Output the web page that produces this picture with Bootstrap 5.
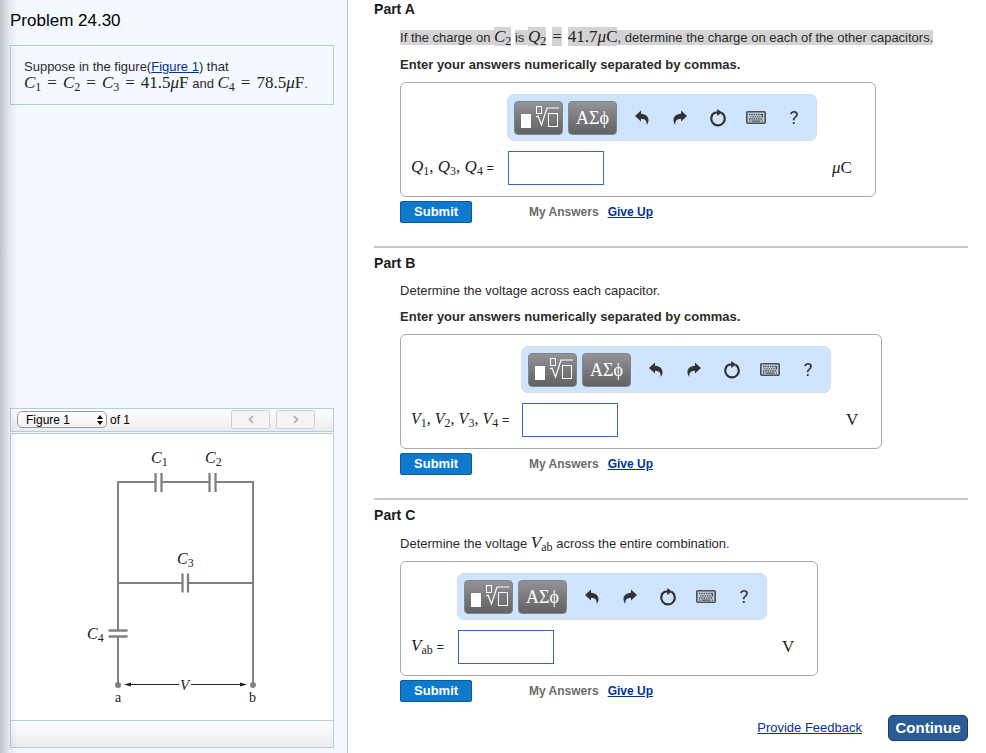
<!DOCTYPE html>
<html lang="en">
<head>
<meta charset="utf-8">
<meta name="viewport" content="width=device-width, initial-scale=1">
<title>Problem 24.30</title>
<link href="https://cdn.jsdelivr.net/npm/bootstrap@5.3.0/dist/css/bootstrap.min.css" rel="stylesheet">
<style>
body{font-family:"Liberation Sans",Arial,sans-serif;font-size:13px;line-height:18px;color:#2b2b2b;background:#fff}
a{color:#003399}
.side-pane{flex:0 0 35.3%;min-width:300px;background:#f4f8ff;border-right:1px solid #b5c9dc;padding:12px 13px 5px 10px}
.side-pane::after{content:"";position:absolute;inset:0 auto 0 0;width:18px;pointer-events:none;background:linear-gradient(90deg,rgba(110,120,125,.42),rgba(110,120,125,.12) 50%,transparent)}
.side-title{font-size:17px;line-height:18px;color:#000;margin-bottom:15px}
.line-blue{border:1px solid #b7cade}
.intro{padding:13px 13px 12px;line-height:16px}
.fig-bar{height:24px;margin-bottom:1px;padding:0 18px 0 6px;background:linear-gradient(#fff,#ececec)}
.fig-foot{height:27px;border-top:1px solid #b7cade;background:linear-gradient(#fff,#ececec)}
.fig-pick{appearance:none;width:90px;height:17px;padding:0 8px;border:1px solid #999;border-radius:5px;background:linear-gradient(#fff,#f1f1f1);font-size:12px;line-height:14px;color:#000}
.fig-pick-arrows{right:4px;top:4px;pointer-events:none}
.fig-of{font-size:12px;margin-left:3px}
.step{width:39px;height:19px;border:1px solid #d0d0d0;border-radius:2px;background:#f4f4f4;padding:0}
.step-prev{margin-right:6px}
.main-pane{padding:0 18px 12px 26px}
.part-title{font-size:14px;line-height:18px;font-weight:bold;color:#1b1b1b;margin-bottom:10px}
.part-body{padding-left:26px}
.part-rule{height:2px;margin:23px 0 6px;border:0;background:#c8c8c8;opacity:1}
.ask{margin-bottom:8px}
.ask-math{line-height:20px}
.ask-only{margin-bottom:7px}
.ask-bold{font-weight:bold;margin-bottom:8px}
.mx{font-family:"Liberation Serif",serif;font-size:17px;line-height:16px;white-space:nowrap;color:#222}
.mx sub{font-size:12px;line-height:0;bottom:-3px;font-style:normal}
.rel{margin:0 6px}
.hl{background:#d3d3d3}
.answer{width:fit-content;border:1px solid #a9a9a9;border-radius:6px;padding:11px 23px 11px 10px;display:grid;grid-template-columns:auto auto auto;row-gap:10px;align-items:center}
.answer label{grid-row:2;grid-column:1;white-space:nowrap}
.label-q{width:96px}
.label-v{width:110px}
.label-v .mx{font-size:16px}
.label-ab{width:46px}
.tools{grid-row:1;grid-column:2;height:47px;border:1px solid #d9dadb;border-radius:7px;background:#cfe5ff;padding:0 3px 0 6px}
.answer input{grid-row:2;grid-column:2;width:96px;height:34px;margin-left:1px;border:1px solid #3366cc;background:#fff}
.unit{grid-row:2;grid-column:3;margin-left:15px}
.pad-btn{width:49px;height:34px;border:1px solid #858589;border-radius:4px;background:linear-gradient(#929298,#626262);color:#fff;padding:0;font-family:"Liberation Serif",serif;font-size:18px;line-height:30px}
.pad-greek{margin:0 6px 0 5px}
.tool-btn{width:38px;height:34px;border:0;background:none;color:#333;padding:0;font-family:Roboto,sans-serif;font-size:19px}
.send{width:72px;height:22px;border:1px solid #0b5a9c;border-radius:2px;background:#0f79ce;color:#fff;font-weight:bold;font-size:13px;line-height:18px;padding:0}
.after{font-size:12px;font-weight:bold}
.mine{color:#6b6b6b;margin-left:57px;margin-right:9px}
.page-end{margin-top:13px}
.feedback{margin-right:26px}
.go-on{width:80px;height:26px;border:1px solid #123f75;border-radius:5px;background:#2b5b97;color:#fff;font-weight:bold;font-size:15px;line-height:22px;padding:0}
svg{display:block}
.tool-btn svg,.pad-btn svg,.step svg{margin:auto}
</style>
<script src="https://cdn.jsdelivr.net/npm/bootstrap@5.3.0/dist/js/bootstrap.bundle.min.js"></script>
</head>
<body>
<svg width="0" height="0" class="position-absolute" aria-hidden="true">
  <symbol id="i-root" viewBox="0 0 40 26">
    <rect x="2" y="9" width="10" height="14" fill="#fff"/>
    <path d="M17 12l2-1 3.500 9 5.500-17h12" fill="none" stroke="#fff" stroke-width="1.200"/>
    <rect x="17.500" y="1.500" width="5" height="7" fill="none" stroke="#fff"/>
    <rect x="29.500" y="8.500" width="9" height="13" fill="none" stroke="#fff"/>
  </symbol>
  <symbol id="i-undo" viewBox="0 0 16 16">
    <path d="M1 6L7 .5v3.200c5 .3 7.500 3 7.500 6.300 0 2-.8 3.700-1.800 5 .3-3.600-1-6.200-5.700-6.300V11.500z" fill="#333"/>
  </symbol>
  <symbol id="i-turn" viewBox="0 0 18 18">
    <path d="M12.500 3.800a6.800 6.800 0 1 1-6.600-.2" fill="none" stroke="#333" stroke-width="2.200"/>
    <path d="M8.200 0l5 3.400-5 3.700z" fill="#333"/>
    <path d="M5.500 4l4-1" stroke="#333" stroke-width="2"/>
  </symbol>
  <symbol id="i-keys" viewBox="0 0 20 13">
    <rect x=".8" y=".8" width="18.400" height="11.400" rx="1" fill="#c3d0dc" stroke="#4a5056" stroke-width="1.600"/>
    <path d="M3 3.500h14M4 5.800h13M3 8h14" stroke="#4a5056" stroke-width="1.300" stroke-dasharray="1.400 .9"/>
    <path d="M5.500 10.200h9M3 10.200h1.200M15.800 10.200h1.200M16.500 3v3" stroke="#4a5056" stroke-width="1.200"/>
  </symbol>
</svg>
<div class="d-flex min-vh-100">
  <aside class="side-pane d-flex flex-column position-relative">
    <h1 class="side-title">Problem 24.30</h1>
    <div class="intro line-blue">Suppose in the figure(<a href="#figure">Figure 1</a>) that<br>
      <span class="mx"><i>C</i><sub>1</sub><span class="rel">=</span><i>C</i><sub>2</sub><span class="rel">=</span><i>C</i><sub>3</sub><span class="rel">=</span>41.5<i>μ</i>F</span> and <span class="mx"><i>C</i><sub>4</sub><span class="rel">=</span>78.5<i>μ</i>F</span>.</div>
    <div class="mt-auto" id="figure">
      <div class="fig-bar line-blue d-flex align-items-center">
        <div class="position-relative">
          <select class="fig-pick d-block" id="fig"><option>Figure 1</option></select>
          <svg class="fig-pick-arrows position-absolute" width="6" height="10" viewBox="0 0 6 10"><path d="M3 0l3 4H0zM3 10l3-4H0z" fill="#111"/></svg>
        </div>
        <label for="fig" class="fig-of me-auto lh-1 text-black">of 1</label>
        <button type="button" class="step step-prev" aria-label="Previous"><svg width="6" height="9" viewBox="0 0 6 9"><path d="M5 1L1.500 4.500 5 8" fill="none" stroke="#aaa" stroke-width="1.700"/></svg></button>
        <button type="button" class="step" aria-label="Next"><svg width="6" height="9" viewBox="0 0 6 9"><path d="M1 1l3.500 3.500L1 8" fill="none" stroke="#aaa" stroke-width="1.700"/></svg></button>
      </div>
      <div class="line-blue bg-white">
        <svg class="w-100 h-auto" viewBox="0 0 322 286" role="img" aria-label="Capacitor network between a and b" font-family="Liberation Serif, serif" font-size="16" fill="#222">
          <g stroke="#808184" stroke-width="2" fill="none">
            <path d="M144.500 48H107v148.500M107 202.500V251M150.500 48h48M204.500 48H242v203M107 149h64.500M177 149h65"/>
            <path stroke-width="2.300" d="M144.500 39v19M150.500 39v19M198.500 39v19M204.500 39v19M171.500 139.500v19M177 139.500v19M97.500 196.500h19M97.500 202.500h19"/>
          </g>
          <circle cx="107" cy="251" r="3" fill="#808184"/><circle cx="242" cy="251" r="3" fill="#808184"/>
          <path d="M118 250.500h50M180 250.500h52" stroke="#222"/>
          <path d="M113 250.500l7-2v4zM236 250.500l-7-2v4z"/>
          <text x="140" y="29" font-style="italic">C<tspan dy="3" font-size="12" font-style="normal">1</tspan></text>
          <text x="194" y="29" font-style="italic">C<tspan dy="3" font-size="12" font-style="normal">2</tspan></text>
          <text x="166" y="130" font-style="italic">C<tspan dy="3" font-size="12" font-style="normal">3</tspan></text>
          <text x="76" y="205" font-style="italic">C<tspan dy="3" font-size="12" font-style="normal">4</tspan></text>
          <text x="169" y="256" font-size="15" font-style="italic">V</text>
          <text x="104" y="268" font-size="14">a</text>
          <text x="238" y="268" font-size="14">b</text>
        </svg>
        <div class="fig-foot"></div>
      </div>
    </div>
  </aside>

  <main class="main-pane flex-grow-1">
    <section>
      <h2 class="part-title">Part A</h2>
      <div class="part-body">
        <p class="ask ask-math"><span class="hl">If the charge on </span><span class="mx hl"><i>C</i><sub>2</sub></span> <span class="hl">is </span><span class="mx"><span class="hl"><i>Q</i><sub>2</sub></span><span class="rel hl">=</span><span class="hl">41.7<i>μ</i>C</span></span><span class="hl">, determine the charge on each of the other capacitors.</span></p>
        <p class="ask-bold">Enter your answers numerically separated by commas.</p>
        <form class="answer">
          <div class="tools d-flex align-items-center" role="toolbar">
            <button type="button" class="pad-btn" aria-label="Templates"><svg width="40" height="26"><use href="#i-root"/></svg></button>
            <button type="button" class="pad-btn pad-greek">ΑΣϕ</button>
            <button type="button" class="tool-btn" aria-label="Undo"><svg width="16" height="16"><use href="#i-undo"/></svg></button>
            <button type="button" class="tool-btn" aria-label="Redo"><svg width="16" height="16"><use href="#i-undo" transform="translate(16 0) scale(-1 1)"/></svg></button>
            <button type="button" class="tool-btn" aria-label="Reset"><svg width="18" height="18"><use href="#i-turn"/></svg></button>
            <button type="button" class="tool-btn" aria-label="Keyboard"><svg width="20" height="13"><use href="#i-keys"/></svg></button>
            <button type="button" class="tool-btn">?</button>
          </div>
          <label class="label-q" for="ans-a"><span class="mx"><i>Q</i><sub>1</sub>, <i>Q</i><sub>3</sub>, <i>Q</i><sub>4</sub></span> =</label>
          <input id="ans-a" type="text">
          <span class="unit mx"><i>μ</i>C</span>
        </form>
        <div class="after d-flex align-items-center mt-1"><button type="button" class="send">Submit</button><span class="mine">My Answers</span><a href="#">Give Up</a></div>
      </div>
    </section>
    <hr class="part-rule">
    <section>
      <h2 class="part-title">Part B</h2>
      <div class="part-body">
        <p class="ask">Determine the voltage across each capacitor.</p>
        <p class="ask-bold">Enter your answers numerically separated by commas.</p>
        <form class="answer">
          <div class="tools d-flex align-items-center" role="toolbar">
            <button type="button" class="pad-btn" aria-label="Templates"><svg width="40" height="26"><use href="#i-root"/></svg></button>
            <button type="button" class="pad-btn pad-greek">ΑΣϕ</button>
            <button type="button" class="tool-btn" aria-label="Undo"><svg width="16" height="16"><use href="#i-undo"/></svg></button>
            <button type="button" class="tool-btn" aria-label="Redo"><svg width="16" height="16"><use href="#i-undo" transform="translate(16 0) scale(-1 1)"/></svg></button>
            <button type="button" class="tool-btn" aria-label="Reset"><svg width="18" height="18"><use href="#i-turn"/></svg></button>
            <button type="button" class="tool-btn" aria-label="Keyboard"><svg width="20" height="13"><use href="#i-keys"/></svg></button>
            <button type="button" class="tool-btn">?</button>
          </div>
          <label class="label-v" for="ans-b"><span class="mx"><i>V</i><sub>1</sub>, <i>V</i><sub>2</sub>, <i>V</i><sub>3</sub>, <i>V</i><sub>4</sub></span> =</label>
          <input id="ans-b" type="text">
          <span class="unit mx">V</span>
        </form>
        <div class="after d-flex align-items-center mt-1"><button type="button" class="send">Submit</button><span class="mine">My Answers</span><a href="#">Give Up</a></div>
      </div>
    </section>
    <hr class="part-rule">
    <section>
      <h2 class="part-title">Part C</h2>
      <div class="part-body">
        <p class="ask-only ask-math">Determine the voltage <span class="mx"><i>V</i><sub>ab</sub></span> across the entire combination.</p>
        <form class="answer">
          <div class="tools d-flex align-items-center" role="toolbar">
            <button type="button" class="pad-btn" aria-label="Templates"><svg width="40" height="26"><use href="#i-root"/></svg></button>
            <button type="button" class="pad-btn pad-greek">ΑΣϕ</button>
            <button type="button" class="tool-btn" aria-label="Undo"><svg width="16" height="16"><use href="#i-undo"/></svg></button>
            <button type="button" class="tool-btn" aria-label="Redo"><svg width="16" height="16"><use href="#i-undo" transform="translate(16 0) scale(-1 1)"/></svg></button>
            <button type="button" class="tool-btn" aria-label="Reset"><svg width="18" height="18"><use href="#i-turn"/></svg></button>
            <button type="button" class="tool-btn" aria-label="Keyboard"><svg width="20" height="13"><use href="#i-keys"/></svg></button>
            <button type="button" class="tool-btn">?</button>
          </div>
          <label class="label-ab" for="ans-c"><span class="mx"><i>V</i><sub>ab</sub></span> =</label>
          <input id="ans-c" type="text">
          <span class="unit mx">V</span>
        </form>
        <div class="after d-flex align-items-center mt-1"><button type="button" class="send">Submit</button><span class="mine">My Answers</span><a href="#">Give Up</a></div>
      </div>
    </section>
    <div class="page-end d-flex justify-content-end align-items-center"><a href="#" class="feedback">Provide Feedback</a><button type="button" class="go-on">Continue</button></div>
  </main>
</div>
</body>
</html>
